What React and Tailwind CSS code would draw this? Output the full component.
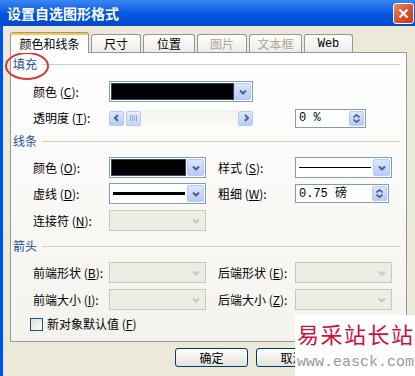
import React from 'react';

const font = "font-['Noto_Sans_CJK_SC','Liberation_Sans',sans-serif]";

function Chevron({ dir = 'down', color = '#4D6185' }) {
  const d = {
    down: 'M1 1.5 L4 4.5 L7 1.5',
    up: 'M1 4.5 L4 1.5 L7 4.5',
    left: 'M5 1 L2 4 L5 7',
    right: 'M3 1 L6 4 L3 7',
  }[dir];
  const box = dir === 'down' || dir === 'up' ? '0 0 8 6' : '0 0 8 8';
  return (
    <svg width="8" height={dir === 'down' || dir === 'up' ? 6 : 8} viewBox={box}>
      <path d={d} fill="none" stroke={color} strokeWidth="2" />
    </svg>
  );
}

function ArrowBtn({ disabled }) {
  return (
    <div
      className={
        disabled
          ? 'w-[17px] h-full flex items-center justify-center rounded-[2px] bg-[#EEEDE5]'
          : 'w-[17px] h-full flex items-center justify-center rounded-[2px] border border-[#B8CAF5] bg-gradient-to-b from-[#DCE6FE] to-[#B6CAF7]'
      }
    >
      <Chevron color={disabled ? '#C9C7BA' : '#4D6185'} />
    </div>
  );
}

function Dropdown({ w, children, disabled }) {
  return (
    <div
      className={
        disabled
          ? `${w} h-[21px] border border-[#C9C7BA] bg-[#EEEDE5] flex p-px`
          : `${w} h-[21px] border border-[#7F9DB9] bg-white flex p-px`
      }
    >
      <div className="flex-1 flex items-center">{children}</div>
      <ArrowBtn disabled={disabled} />
    </div>
  );
}

function Spin({ w, value }) {
  return (
    <div className={`${w} h-[19px] border border-[#7F9DB9] bg-white flex p-px`}>
      <div className="flex-1 flex items-center pl-[2px] text-[12px] font-['Liberation_Mono','Noto_Sans_CJK_SC',monospace] leading-none">
        {value}
      </div>
      <div className="w-[15px] h-full rounded-[2px] border border-[#B8CAF5] bg-gradient-to-b from-[#DCE6FE] to-[#B6CAF7] flex flex-col items-center justify-center gap-px">
        <svg width="7" height="4" viewBox="0 0 7 4">
          <path d="M0.5 3.5 L3.5 0.8 L6.5 3.5" fill="none" stroke="#4D6185" strokeWidth="1.6" />
        </svg>
        <svg width="7" height="4" viewBox="0 0 7 4">
          <path d="M0.5 0.5 L3.5 3.2 L6.5 0.5" fill="none" stroke="#4D6185" strokeWidth="1.6" />
        </svg>
      </div>
    </div>
  );
}

function Label({ text, k, w = 'w-[76px]' }) {
  return (
    <div className={`${w} text-[12px] leading-none whitespace-nowrap`}>
      {text} (<span className="underline">{k}</span>):
    </div>
  );
}

function Heading({ text, mt }) {
  return (
    <div className={`${mt} h-[16px] flex items-center pl-[2px] pr-[6px] gap-[5px]`}>
      <span className="text-[12px] leading-none text-[#1E4E9A]">{text}</span>
      <div className="flex-1 h-px bg-[#D0D0BF]" />
    </div>
  );
}

function Tab({ text, active, disabled, mono, w }) {
  if (active) {
    return (
      <div className={`${w} h-[21px] -mb-px relative z-10 bg-white border border-[#919B9C] border-b-0 rounded-t-[3px] overflow-hidden flex flex-col`}>
        <div className="h-[2px] bg-[#FFC83C]" />
        <div className="flex-1 flex items-center justify-center text-[12px] leading-none">{text}</div>
      </div>
    );
  }
  return (
    <div
      className={`${w} h-[18px] bg-gradient-to-b from-white to-[#ECEBE6] border border-[#919B9C] border-b-0 rounded-t-[3px] flex items-center justify-center text-[12px] leading-none ${
        disabled ? 'text-[#ACA899]' : 'text-black'
      } ${mono ? "font-['Liberation_Mono',monospace] text-[11px]" : ''}`}
    >
      {text}
    </div>
  );
}

function Button({ text }) {
  return (
    <div className="w-[73px] h-[19px] rounded-[3px] border border-[#003C74] bg-gradient-to-b from-white to-[#E3E2DA] flex items-center justify-center text-[12px] leading-none">
      {text}
    </div>
  );
}

export default function App() {
  return (
    <div className={`w-[415px] h-[376px] overflow-hidden relative bg-[#ECE9D8] text-black ${font}`}>
      {/* title bar */}
      <div className="h-[26px] flex items-center justify-between pl-[7px] pr-[1px] bg-gradient-to-b from-[#3A86F5] via-[#0757E0] to-[#0049CC]">
        <span className="text-white font-bold text-[14px] leading-none tracking-[0px]">设置自选图形格式</span>
        <div className="w-[21px] h-[21px] rounded-[3px] border border-white bg-gradient-to-br from-[#E88A66] via-[#D8552E] to-[#C23C17] flex items-center justify-center">
          <svg width="11" height="11" viewBox="0 0 11 11">
            <path d="M1.5 1.5 L9.5 9.5 M9.5 1.5 L1.5 9.5" stroke="white" strokeWidth="2.2" />
          </svg>
        </div>
      </div>

      <div className="h-[350px] border-l-[3px] border-[#0054E3] pl-[7px] pt-[6px]">
        {/* tabs */}
        <div className="flex items-end gap-[2px] h-[20px]">
          <Tab text="颜色和线条" active w="w-[79px]" />
          <Tab text="尺寸" w="w-[50px]" />
          <Tab text="位置" w="w-[52px]" />
          <Tab text="图片" disabled w="w-[50px]" />
          <Tab text="文本框" disabled w="w-[53px]" />
          <Tab text="Web" mono w="w-[49px]" />
        </div>

        {/* panel */}
        <div className="w-[397px] h-[290px] border border-[#919B9C] bg-gradient-to-b from-white to-[#F4F3EE] pt-[3px] flex flex-col">
          <Heading text="填充" mt="" />

          <div className="mt-[9px] h-[21px] flex items-center pl-[22px]">
            <Label text="颜色" k="C" />
            <div className="w-[144px] h-[21px] border border-[#7F9DB9] bg-white flex p-px">
              <div className="flex-1 border border-[#34466A] bg-black" />
              <ArrowBtn />
            </div>
          </div>

          <div className="mt-[6px] h-[20px] flex items-center pl-[22px]">
            <Label text="透明度" k="T" />
            <div className="w-[144px] h-[16px] flex items-center bg-[#F7F7F2]">
              <div className="w-[15px] h-[15px] rounded-[2px] border border-[#B8CAF5] bg-gradient-to-b from-[#DCE6FE] to-[#B6CAF7] flex items-center justify-center">
                <Chevron dir="left" />
              </div>
              <div className="ml-[2px] w-[15px] h-[15px] rounded-[2px] border border-[#B8CAF5] bg-gradient-to-b from-[#E6EDFE] to-[#C4D5F8] flex items-center justify-center gap-px">
                <div className="w-px h-[6px] bg-[#8FA8DA]" />
                <div className="w-px h-[6px] bg-[#8FA8DA]" />
                <div className="w-px h-[6px] bg-[#8FA8DA]" />
                <div className="w-px h-[6px] bg-[#8FA8DA]" />
              </div>
              <div className="flex-1 h-full bg-gradient-to-b from-[#F3F3EC] to-[#FBFBF8]" />
              <div className="w-[15px] h-[15px] rounded-[2px] border border-[#B8CAF5] bg-gradient-to-b from-[#DCE6FE] to-[#B6CAF7] flex items-center justify-center">
                <Chevron dir="right" />
              </div>
            </div>
            <div className="ml-[42px]">
              <Spin w="w-[71px]" value="0 %" />
            </div>
          </div>

          <Heading text="线条" mt="mt-[5px]" />

          <div className="mt-[8px] h-[21px] flex items-center pl-[22px]">
            <Label text="颜色" k="O" />
            <div className="w-[97px] h-[21px] border border-[#7F9DB9] bg-white flex p-px">
              <div className="flex-1 mr-px border border-[#34466A] bg-black" />
              <ArrowBtn />
            </div>
            <div className="ml-[12px]">
              <Label text="样式" k="S" w="w-[77px]" />
            </div>
            <Dropdown w="w-[97px]">
              <div className="w-full px-[2px]">
                <div className="h-px bg-black" />
              </div>
            </Dropdown>
          </div>

          <div className="mt-[5px] h-[21px] flex items-center pl-[22px]">
            <Label text="虚线" k="D" />
            <Dropdown w="w-[97px]">
              <div className="w-full px-[2px]">
                <div className="h-[3px] bg-black" />
              </div>
            </Dropdown>
            <div className="ml-[12px]">
              <Label text="粗细" k="W" w="w-[77px]" />
            </div>
            <Spin w="w-[94px]" value="0.75 磅" />
          </div>

          <div className="mt-[6px] h-[21px] flex items-center pl-[22px]">
            <Label text="连接符" k="N" />
            <Dropdown w="w-[97px]" disabled />
          </div>

          <Heading text="箭头" mt="mt-[7px]" />

          <div className="mt-[8px] h-[21px] flex items-center pl-[22px]">
            <Label text="前端形状" k="B" />
            <Dropdown w="w-[97px]" disabled />
            <div className="ml-[12px]">
              <Label text="后端形状" k="E" w="w-[77px]" />
            </div>
            <Dropdown w="w-[97px]" disabled />
          </div>

          <div className="mt-[6px] h-[21px] flex items-center pl-[22px]">
            <Label text="前端大小" k="I" />
            <Dropdown w="w-[97px]" disabled />
            <div className="ml-[12px]">
              <Label text="后端大小" k="Z" w="w-[77px]" />
            </div>
            <Dropdown w="w-[97px]" disabled />
          </div>

          <div className="mt-[6px] h-[16px] flex items-center pl-[19px] gap-[4px]">
            <div className="w-[13px] h-[13px] border border-[#1C5180] bg-gradient-to-br from-[#DCDCD7] to-white" />
            <span className="text-[12px] leading-none">
              新对象默认值 (<span className="underline">F</span>)
            </span>
          </div>
        </div>

        {/* buttons */}
        <div className="mt-[6px] flex pl-[165px] gap-[8px]">
          <Button text="确定" />
          <Button text="取消" />
        </div>
      </div>

      {/* red annotation circle */}
      <svg className="absolute left-[4px] top-[51px]" width="46" height="30" viewBox="0 0 46 30">
        <ellipse cx="23" cy="15" rx="21" ry="13" fill="none" stroke="#D43A3A" strokeWidth="2" />
      </svg>

      {/* watermark */}
      <div className="absolute left-[295px] top-[315px] w-[120px] h-[61px] bg-white flex flex-col pt-[6px] pl-[2px]">
        <span className="text-[22px] leading-[24px] text-[#D0103A] tracking-[1.5px] whitespace-nowrap">易采站长站</span>
        <span className="mt-[10px] text-[15px] leading-none text-[#9A9A9A] font-['Liberation_Mono',monospace] whitespace-nowrap">www.easck.com</span>
      </div>
    </div>
  );
}
